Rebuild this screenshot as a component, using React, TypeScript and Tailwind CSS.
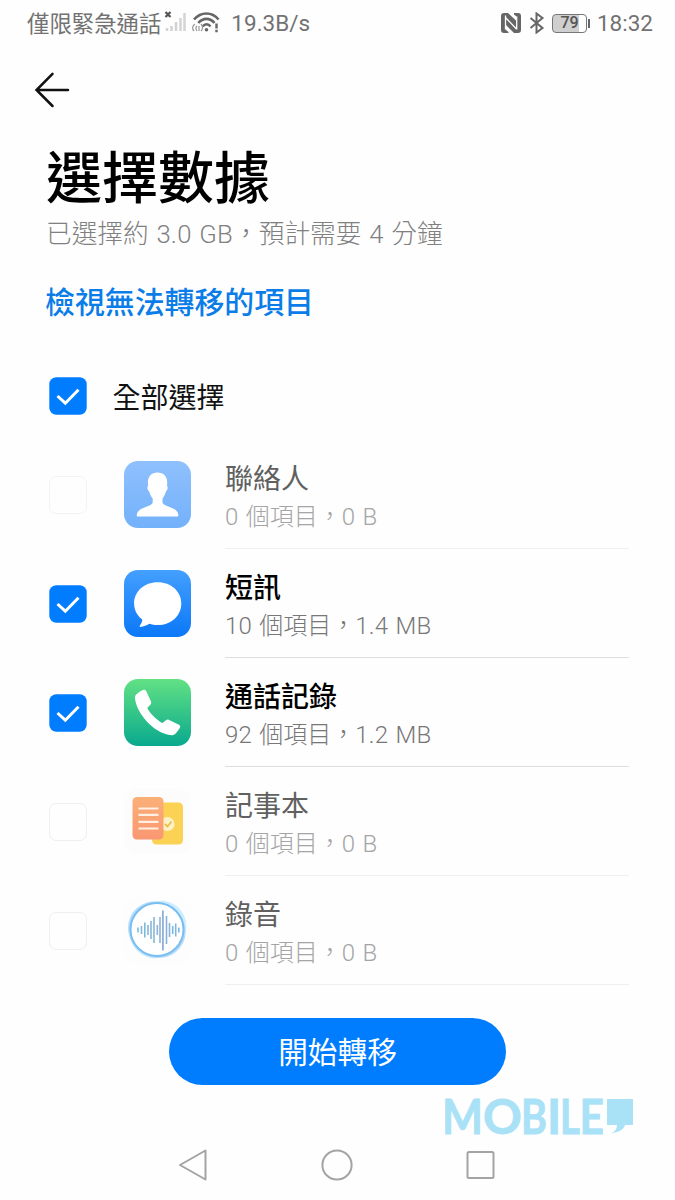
import type { ReactNode } from "react";

type Item = { title: string; detail: string; checked: boolean; icon: ReactNode };

function Checkbox({ checked, faint = false }: { checked: boolean; faint?: boolean }) {
  if (!checked) {
    return (
      <span
        className={
          faint
            ? "size-[38px] shrink-0 rounded-[7px] border-[1.5px] border-[#f3f3f3]"
            : "size-[38px] shrink-0 rounded-[7px] border-[1.5px] border-[#efefef]"
        }
      />
    );
  }
  return (
    <svg className="size-[38px] shrink-0" viewBox="0 0 38 38" fill="none">
      <rect x="0.3" y="0.3" width="37.4" height="37.4" rx="7" fill="#007dff" />
      <path d="M8.500 19l7.800 7.200L29.500 12.800" stroke="#fff" strokeWidth="3" />
    </svg>
  );
}

/* Sets Latin runs one step heavier than the light Chinese text around them. */
function Mixed({ text }: { text: string }) {
  return (
    <>
      {text.split(/([\x20-\x7e]+)/).map((part, i) =>
        i % 2 ? (
          <span key={i} className="font-[350] tracking-[0.2px] [word-spacing:1.200px]">
            {part}
          </span>
        ) : (
          part
        ),
      )}
    </>
  );
}

function ContactsIcon() {
  return (
    <svg className="size-[67px]" viewBox="0 0 67 67">
      <defs>
        <linearGradient id="contacts" x1="0" y1="0" x2="0" y2="1">
          <stop offset="0" stopColor="#8fc0fd" />
          <stop offset="1" stopColor="#73b1fb" />
        </linearGradient>
      </defs>
      <rect width="67" height="67" rx="14" fill="url(#contacts)" />
      <path
        d="M33.5 11.500c6.300 0 9.700 4 9.700 10 0 1.300-.1 2.600-.3 3.600 1.300.4 1 3.700-.9 5.200-.7 3-2.100 5.300-3.500 7.200v3.200c0 1.700 1 2.700 2.800 3.500l7.200 3c4 1.600 5.500 3.800 5.900 7 0 .9-.5 1.300-1.300 1.300H13.900c-.8 0-1.300-.5-1.200-1.300.4-3.200 2-5.400 6-7l7.300-3c1.800-.8 2.700-1.800 2.700-3.500v-3.200c-1.700-1.900-2.900-4.200-3.600-7.200-1.900-1.500-2.200-4.800-.9-5.200-.2-1-.3-2.300-.3-3.600 0-6 3.500-10 9.600-10z"
        fill="#fff"
      />
    </svg>
  );
}

function MessagesIcon() {
  return (
    <svg className="size-[67px]" viewBox="0 0 67 67">
      <defs>
        <linearGradient id="messages" x1="0" y1="0" x2="0" y2="1">
          <stop offset="0" stopColor="#449fff" />
          <stop offset="1" stopColor="#0b78f8" />
        </linearGradient>
      </defs>
      <rect width="67" height="67" rx="14" fill="url(#messages)" />
      <path
        d="M33.700 12.200c13.400 0 23.600 9 23.600 21.200s-10.200 21.700-23.600 21.700c-3.200 0-5.800-.4-8.400-1.300-2.700 1.700-5.600 2.800-8.900 3.100-.9.100-1-.6-.6-1.200 1.600-2.200 2.500-4.400 2.500-6.200-5.300-4.100-8.200-9.800-8.200-16.100 0-12.200 10.200-21.200 23.600-21.200z"
        fill="#fff"
      />
    </svg>
  );
}

function PhoneIcon() {
  return (
    <svg className="size-[67px]" viewBox="0 0 67 67">
      <defs>
        <linearGradient id="phone" x1="0" y1="0" x2="0" y2="1">
          <stop offset="0" stopColor="#62e184" />
          <stop offset="1" stopColor="#09a98e" />
        </linearGradient>
      </defs>
      <rect width="67" height="67" rx="14" fill="url(#phone)" />
      <path
        d="M12.500 15.200c2-1.800 4.300-3.300 6.400-4.300 1.400-.6 2.700-.1 3.300 1.200l4.800 10.400c.5 1.200.2 2.300-.7 3.200l-3.100 3.200c2.800 5.500 9.100 11.700 15.200 15l3.600-2.700c1-.8 2-.8 3.100-.3l9.900 4.900c1.300.7 1.500 2 .8 3.200-1.200 2-2.500 3.800-4.100 5.500-1.400 1.400-3.400 2.100-6.200 1.600C29.200 53.100 12.900 35 11 19.500c-.2-1.900.3-3.300 1.500-4.300z"
        fill="#fff"
      />
    </svg>
  );
}

function NotesIcon() {
  return (
    <svg className="size-[67px]" viewBox="0 0 67 67" fill="none">
      <defs>
        <linearGradient id="notes" x1="0" y1="0" x2="0" y2="1">
          <stop offset="0" stopColor="#fbb077" />
          <stop offset="1" stopColor="#f99772" />
        </linearGradient>
      </defs>
      <rect width="67" height="67" rx="14" fill="#fcfcfc" />
      <rect x="28" y="14.500" width="31" height="42" rx="4.500" fill="#fbd253" />
      <circle cx="43.500" cy="36" r="7" fill="#fdf0c4" />
      <path d="M41 36l2.500 2.500 4-5" stroke="#e8c04c" strokeWidth="1.800" />
      <rect x="8.500" y="9" width="31" height="42.500" rx="4.500" fill="url(#notes)" />
      <path d="M14.500 20.500h20M14.500 26.800h20M14.500 33.800h20M14.500 40.500h20" stroke="#fff0e3" strokeWidth="2.200" />
    </svg>
  );
}

function RecorderIcon() {
  const bars = [
    [14, 2.5], [17.5, 4], [20.800, 7.5], [24, 5], [27, 9], [30, 13], [33.300, 5],
    [36, 13], [42.500, 14], [45.500, 7], [48.700, 4], [51.700, 6.500], [54.800, 2.500],
  ];
  return (
    <svg className="size-[67px]" viewBox="0 0 67 67" fill="none">
      <defs>
        <linearGradient id="waves" x1="12" y1="0" x2="57" y2="0" gradientUnits="userSpaceOnUse">
          <stop offset="0" stopColor="#79bddc" />
          <stop offset="0.600" stopColor="#8db0d6" />
          <stop offset="1" stopColor="#72b9e5" />
        </linearGradient>
      </defs>
      <rect width="67" height="67" rx="14" fill="#fdfdfd" />
      <ellipse cx="34" cy="32.500" rx="30" ry="27" transform="rotate(-48 34 32.500)" fill="#cdeeff" />
      <ellipse cx="32.800" cy="32.700" rx="29.500" ry="27.500" transform="rotate(38 32.800 32.700)" fill="#b4dcfb" />
      <circle cx="33" cy="32.500" r="26.500" fill="#fff" stroke="#7abef1" strokeWidth="2" />
      {bars.map(([x, h]) => (
        <path key={x} d={`M${x} ${33 - h}V${33 + h}`} stroke="url(#waves)" strokeWidth="1.600" />
      ))}
      <rect x="38" y="13.500" width="1.800" height="40" fill="#93aed6" />
    </svg>
  );
}

const items: Item[] = [
  { title: "聯絡人", detail: "0 個項目，0 B", checked: false, icon: <ContactsIcon /> },
  { title: "短訊", detail: "10 個項目，1.4 MB", checked: true, icon: <MessagesIcon /> },
  { title: "通話記錄", detail: "92 個項目，1.2 MB", checked: true, icon: <PhoneIcon /> },
  { title: "記事本", detail: "0 個項目，0 B", checked: false, icon: <NotesIcon /> },
  { title: "錄音", detail: "0 個項目，0 B", checked: false, icon: <RecorderIcon /> },
];

function Row({ title, detail, checked, icon }: Item) {
  return (
    <li className="flex h-[109px] items-center">
      <Checkbox checked={checked} faint={title === "聯絡人"} />
      <div className="ml-[37px] size-[67px] shrink-0">{icon}</div>
      <div
        className={
          checked
            ? "ml-[34px] flex h-full flex-1 flex-col border-b border-[#dedede] pt-[20px]"
            : "ml-[34px] flex h-full flex-1 flex-col border-b border-[#efefef] pt-[20px]"
        }
      >
        <span
          className={
            checked
              ? "pl-[0.500px] text-[28px] leading-[39px] font-medium text-black"
              : "pl-[0.500px] text-[28px] leading-[39px] text-[#606060]"
          }
        >
          {title}
        </span>
        <span
          className={
            checked
              ? "pl-[0.500px] text-[24px] leading-[37px] font-light text-[#777]"
              : "pl-[0.500px] text-[24px] leading-[37px] font-light text-[#a5a5a5]"
          }
        >
          <Mixed text={detail} />
        </span>
      </div>
    </li>
  );
}

function StatusBar() {
  return (
    <header className="flex h-[46px] items-center pr-[22px] pl-[27px] text-[#727272]">
      <span className="pt-[2px] text-[22.400px] leading-[46px]">僅限緊急通話</span>
      <svg className="ml-[3px] h-[24px] w-[58px]" viewBox="0 0 58 24" fill="none">
        <path d="M1.500 1l5 5M6.500 1l-5 5" stroke="#555" strokeWidth="2.200" />
        <path d="M3 17v3M7.500 15v5M12 11v9M16.500 7v13M20.500 2v18" stroke="#d3d3d3" strokeWidth="2.500" />
        <path d="M30 8.500C37 .5 48 .5 54.500 8.500M34.300 12C39 6.500 46 6.500 50.500 12" stroke="#666" strokeWidth="2.600" />
        <path d="M38.500 15.500c2.400-3 6-3 8 0" stroke="#666" strokeWidth="2.300" />
        <circle cx="42.500" cy="18.700" r="1.800" fill="#666" />
        <path d="M52.500 12.500v5M52.500 18.800v2.400" stroke="#666" strokeWidth="2.400" />
        <path d="M31 13c-3 2-3 5-1 7M33 15c-1.500 1.500-1.500 3 0 5M37 13c2 2 2 5 0 7M35 15v5" stroke="#999" strokeWidth="1.200" />
      </svg>
      <span className="ml-[9px] pt-[2px] text-[22.500px]">19.3B/s</span>
      <div className="ml-auto flex items-center">
        <svg className="h-[22px] w-[22px]" viewBox="0 0 22 22">
          <path
            d="M4 1h4l8.500 8V4.500L14 2.500V1h4q3 0 3 3v14q0 3-3 3h-4L6 13v5l2.500 2V21H4q-3 0-3-3V4q0-3 3-3z"
            fill="#666"
          />
          <path d="M5.500 3.500v14M5.500 5.500L16.500 17M16.700 4.500v13" stroke="#fff" strokeWidth="1.300" fill="none" />
        </svg>
        <svg className="ml-[7px] h-[22px] w-[16px]" viewBox="0 0 16 22" fill="none">
          <path d="M1.500 6l12 10L7.500 20.500V1.500L13.500 6l-12 10" stroke="#666" strokeWidth="2" />
        </svg>
        <div className="ml-[7px] flex h-[19px] w-[35px] items-center justify-center rounded-[4px] border-[1.500px] border-[#777] bg-gradient-to-r from-[#cfcfcf] from-80% to-white to-80% text-[16px] leading-none font-medium text-[#555]">
          79
        </div>
        <span className="ml-px h-[9px] w-[2px] bg-[#666]" />
        <span className="ml-[7px] pt-[2px] text-[22.500px]">18:32</span>
      </div>
    </header>
  );
}

export default function App() {
  return (
    <div
      lang="zh-Hant"
      className="flex h-[1200px] w-[675px] flex-col overflow-hidden bg-[#fefefe] font-['Roboto','Noto_Sans_CJK_TC',sans-serif] whitespace-nowrap"
    >
      <StatusBar />
      <div className="flex h-[88px] items-center pl-[34px]">
        <svg className="h-[36px] w-[36px]" viewBox="0 0 36 36" fill="none">
          <path d="M18.500 1.800L2.500 18l16 16M2.500 18H34" stroke="#111" strokeWidth="2.500" strokeLinecap="round" />
        </svg>
      </div>
      <main className="flex h-[884px] flex-col pl-[46px]">
        <h1 className="h-[80px] pt-[3px] text-[56px] leading-[84px] font-medium text-black">選擇數據</h1>
        <p className="h-[40px] text-[25.700px] leading-[40px] font-light text-[#808080]">
          <Mixed text="已選擇約 3.0 GB，預計需要 4 分鐘" />
        </p>
        <a className="mt-[29px] -ml-px h-[40px] text-[29.900px] leading-[40px] font-medium text-[#0a7de8]">檢視無法轉移的項目</a>
        <label className="mt-[28px] flex h-[90px] items-start pt-[26px] pl-[2.500px]">
          <Checkbox checked />
          <span className="ml-[26px] pt-[3px] text-[28px] leading-[38px] text-[#111]">全部選擇</span>
        </label>
        <ul className="mt-[-1px] flex flex-col pr-[46px] pl-[2.500px]">
          {items.map((item) => (
            <Row key={item.title} {...item} />
          ))}
        </ul>
      </main>
      <button className="mx-auto h-[67px] w-[337px] shrink-0 rounded-full bg-[#007dff] pt-[3px] text-[29.700px] leading-[64px] text-white">
        開始轉移
      </button>
      <div className="flex h-[52px] shrink-0 items-end justify-end pr-[41px]">
        <svg className="h-[50px] w-[192px]" viewBox="0 -10 192 50" overflow="visible">
          <text
            y="36.500"
            fill="#a9e1f6"
            stroke="#a9e1f6"
            strokeWidth="0.800"
            className="font-['Lato'] text-[48px] font-bold"
          >
            <tspan x="0" textLength="41" lengthAdjust="spacingAndGlyphs">M</tspan>
            <tspan x="41">O</tspan>
            <tspan x="79" textLength="26" lengthAdjust="spacingAndGlyphs">B</tspan>
            <tspan x="105">I</tspan>
            <tspan x="118" textLength="20" lengthAdjust="spacingAndGlyphs">L</tspan>
            <tspan x="137.500" textLength="24.500" lengthAdjust="spacingAndGlyphs">E</tspan>
          </text>
          <path d="M165 2h26v26h-8c-1 4-5 7-14 8.500 4-2 6-4.500 6-8.500h-10z" fill="#a9e1f6" />
        </svg>
      </div>
      <nav className="flex h-[56px] shrink-0 items-center justify-between pr-[178px] pl-[177px]">
        <svg className="size-[32px]" viewBox="0 0 32 32" fill="none">
          <path d="M28.500 1.500v29L3 16z" stroke="#a3a3a3" strokeWidth="2" strokeLinejoin="round" />
        </svg>
        <svg className="size-[32px]" viewBox="0 0 32 32" fill="none">
          <circle cx="16" cy="16" r="14.600" stroke="#a3a3a3" strokeWidth="2" />
        </svg>
        <svg className="size-[32px]" viewBox="0 0 32 32" fill="none">
          <rect x="2.500" y="3" width="26" height="26" rx="1.500" stroke="#a3a3a3" strokeWidth="2" />
        </svg>
      </nav>
    </div>
  );
}
